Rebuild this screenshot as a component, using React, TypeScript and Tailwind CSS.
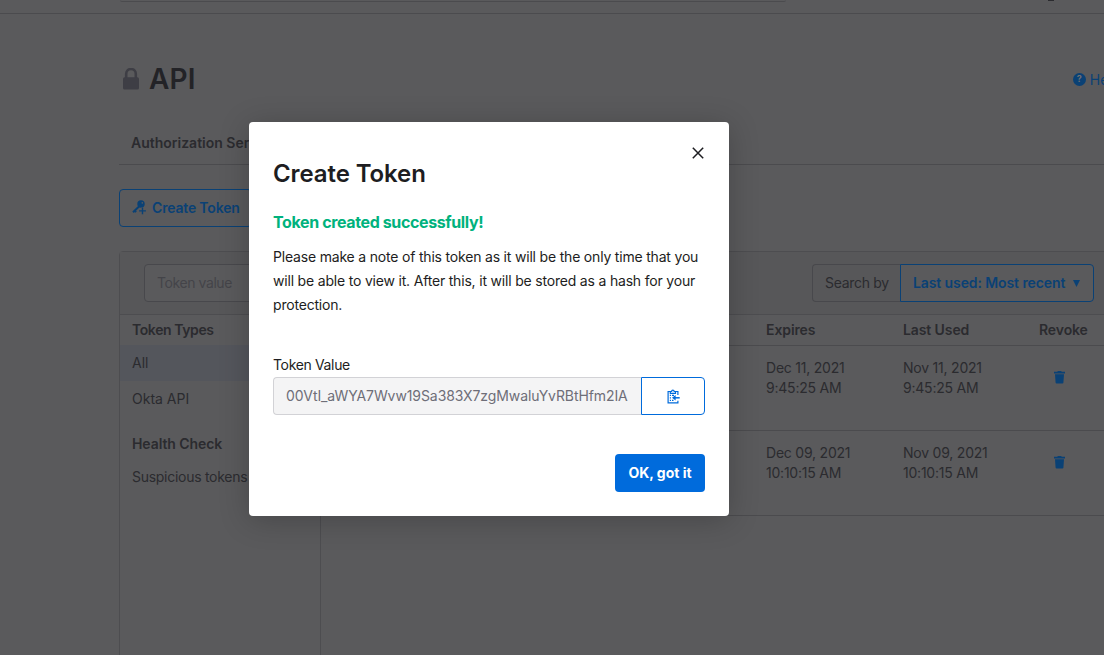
import React from "react";

const LockIcon = () => (
  <svg width="18" height="23" viewBox="0 0 18 23" className="shrink-0">
    <path d="M4.200 10V5.800a4.800 4.800 0 0 1 9.600 0V10" fill="none" stroke="#3e3e45" strokeWidth="2.600" />
    <rect x="1" y="9.300" width="16" height="12.300" rx="1.600" fill="#3e3e45" />
  </svg>
);

const KeyPlusIcon = () => (
  <svg width="15" height="15" viewBox="0 0 15 15" className="shrink-0">
    <path d="M7 6.500L1 12.300M2.600 10.600l1.500 1.500" stroke="#0a4175" strokeWidth="2" fill="none" />
    <circle cx="9" cy="4" r="3.700" fill="#0a4175" />
    <circle cx="10.300" cy="2.900" r=".8" fill="#5a5a5c" />
    <path d="M10.500 7.500v6.800M7.100 10.900h6.800" stroke="#5a5a5c" strokeWidth="2.600" />
    <path d="M10.500 7.500v6.800M7.100 10.900h6.800" stroke="#0a4175" strokeWidth="1.400" />
  </svg>
);

const TrashIcon = () => (
  <svg width="11" height="13" viewBox="0 0 11 13" fill="#0a4175">
    <path d="M0 .800h3.300L3.800 0h3.400l.5.800H11v1.700H0zM1 3.300h9l-.6 8.400a1 1 0 0 1-1 .8H2.600a1 1 0 0 1-1-.8z" />
  </svg>
);

const ClipboardIcon = () => (
  <svg width="13" height="15" viewBox="0 0 13 15" fill="none" stroke="#006bdc" strokeWidth="1.200">
    <path d="M3 2.500H1.100v11.400h9.800v-2.200M8.200 2.500h2.700v3.500" />
    <path d="M3.300 4.300V2.500h1.300a1.300 1.300 0 0 1 2.600 0h1.300v1.800z" />
    <path d="M2.800 6.400h1.200M5 6.400h2M2.800 8.800h1.200M2.800 11.300h1.200M5 11.300h1.500" />
    <path d="M12.700 8.800H7.500" strokeWidth="1.500" />
    <path d="M8.600 6.100v5.400L5 8.800z" fill="#006bdc" stroke="none" />
  </svg>
);

const tokens = [
  { expires: ["Dec 11, 2021", "9:45:25 AM"], used: ["Nov 11, 2021", "9:45:25 AM"] },
  { expires: ["Dec 09, 2021", "10:10:15 AM"], used: ["Nov 09, 2021", "10:10:15 AM"] },
];

function Stamp({ lines }: { lines: string[] }) {
  return (
    <div className="w-[137px] shrink-0 tracking-[-0.22px] whitespace-nowrap">
      {lines.map((l) => (
        <div key={l}>{l}</div>
      ))}
    </div>
  );
}

function Modal() {
  return (
    <div className="absolute left-[249px] top-[122px] flex h-[394px] w-[480px] flex-col rounded-[4px] bg-white px-6 text-[#1d1d21] shadow-[0_4px_30px_rgba(0,0,0,0.22)]">
      <div className="flex h-[62px] justify-end pt-[25px] pr-[1px]">
        <svg width="12" height="12" viewBox="0 0 12 12" stroke="#1d1d21" strokeWidth="1.500">
          <path d="M.8.800l10.400 10.400M11.200.800L.8 11.200" />
        </svg>
      </div>
      <h2 className="-mt-[26px] text-[24px] leading-[32px] font-semibold tracking-[-0.1px]">Create Token</h2>
      <h3 className="mt-[20px] text-[16px] leading-[24px] font-bold tracking-[-0.38px] text-[#00b27d]">Token created successfully!</h3>
      <p className="mt-[11px] text-[14px] leading-[24px] tracking-[-0.19px] whitespace-nowrap">
        Please make a note of this token as it will be the only time that you
        <br />
        will be able to view it. After this, it will be stored as a hash for your
        <br />
        protection.
      </p>
      <div className="mt-[38px] text-[14px] leading-[20px] tracking-[-0.35px]">Token Value</div>
      <div className="mt-[2px] flex h-[38px]">
        <div className="flex w-[368px] items-center rounded-l-[4px] border border-r-0 border-[#d2d2d6] bg-[#f4f4f5] px-3 pb-[1px] text-[14px] tracking-[-0.09px] whitespace-nowrap text-[#6e6e78]">
          00VtI_aWYA7Wvw19Sa383X7zgMwaluYvRBtHfm2IA
        </div>
        <button className="flex w-[64px] items-center justify-center rounded-r-[4px] border border-[#006bdc]">
          <ClipboardIcon />
        </button>
      </div>
      <button className="mt-[39px] h-[38px] w-[90px] self-end rounded-[4px] bg-[#006bdc] pb-[2px] text-[14px] font-bold whitespace-nowrap text-white">
        OK, got it
      </button>
    </div>
  );
}

export default function App() {
  return (
    <div className="relative h-[655px] w-[1104px] overflow-hidden bg-[#5a5a5c] font-['Inter',sans-serif] text-[14px] text-[#2b2b2f]">
      <header className="flex h-[14px] items-start border-b border-[#4b4b4e] pl-[120px]">
        <div className="h-[2px] w-[666px] rounded-b-[2px] border-b border-[#4b4b4e]" />
        <div className="ml-[262px] h-[1px] w-[6px] bg-[#2b2b2f]" />
      </header>

      <div className="ml-[119px] flex flex-col">
        <div className="flex h-[106px] items-center pt-[24px] pl-[3px]">
          <LockIcon />
          <h1 className="ml-[9px] w-[47px] text-[28px] leading-[34px] font-semibold tracking-[0.2px] text-[#232327]">API</h1>
          <div className="ml-[877px] flex shrink-0 items-center text-[#0a4175]">
            <span className="flex h-[13px] w-[13px] items-center justify-center rounded-full bg-[#0a4175] text-[9px] font-bold text-[#707072]">?</span>
            <span className="ml-[4px]">Help</span>
          </div>
        </div>
        <div className="flex h-[45px] items-center border-b border-[#4b4b4e] pt-[1px] pl-[12px] font-semibold">
          Authorization Servers
        </div>
        <button className="mt-[24px] flex h-[38px] w-[133px] items-center rounded-[4px] border border-[#0a4175] pb-[1px] pl-[12px] font-semibold whitespace-nowrap text-[#0a4175]">
          <KeyPlusIcon />
          <span className="ml-[5px] tracking-[-0.18px]">Create Token</span>
        </button>

        <section className="mt-[24px] h-[420px] w-[1000px] rounded-tl-[4px] border border-[#4d4d50]">
          <div className="flex h-[63px] items-start justify-between border-b border-[#4d4d50] bg-[#575759] pt-[12px] pr-[24px] pl-[24px]">
            <div className="flex h-[38px] w-[220px] items-center rounded-[4px] border border-[#48484c] bg-[#5a5a5c] pb-[1px] pl-[12px] tracking-[-0.42px] text-[#444449]">
              Token value
            </div>
            <div className="flex h-[38px] w-[282px]">
              <div className="flex w-[88px] items-center rounded-l-[4px] border border-r-0 border-[#48484c] pb-[1px] pl-[12px] tracking-[-0.3px] whitespace-nowrap">
                Search by
              </div>
              <button className="flex w-[194px] items-center rounded-r-[4px] border border-[#0a4175] bg-[#5a5a5c] pb-[1px] pl-[12px] font-semibold whitespace-nowrap text-[#0a4175]">
                <span className="tracking-[-0.1px]">Last used: Most recent</span>
                <svg width="7" height="7" viewBox="0 0 7 7" className="mt-[2px] ml-[8px]">
                  <path d="M0 0h7L3.500 7z" fill="#0a4175" />
                </svg>
              </button>
            </div>
          </div>
          <div className="flex h-full">
            <aside className="w-[201px] shrink-0 border-r border-[#4d4d50]">
              <div className="h-[30px] pl-[12px] leading-[30px] font-semibold tracking-[-0.4px]">Token Types</div>
              <div className="h-[36px] bg-[#54565c] pl-[12px] leading-[36px]">All</div>
              <div className="h-[36px] pl-[12px] leading-[36px]">Okta API</div>
              <div className="mt-[12px] h-[30px] pl-[12px] leading-[30px] font-semibold tracking-[-0.08px]">Health Check</div>
              <div className="h-[36px] pl-[12px] leading-[36px] tracking-[-0.28px]">Suspicious tokens</div>
            </aside>
            <div className="flex-1 leading-[20px]">
              <div className="flex h-[31px] items-center border-b border-[#4b4b4e] pl-[445px] font-semibold tracking-[-0.1px]">
                <div className="w-[137px]">Expires</div>
                <div className="w-[136px]">Last Used</div>
                <div>Revoke</div>
              </div>
              {tokens.map((t) => (
                <div key={t.expires[0]} className="flex h-[85px] border-b border-[#4b4b4e] pt-[12px] pl-[445px]">
                  <Stamp lines={t.expires} />
                  <Stamp lines={t.used} />
                  <div className="pt-[13px] pl-[14px]">
                    <TrashIcon />
                  </div>
                </div>
              ))}
            </div>
          </div>
        </section>
      </div>
      <Modal />
    </div>
  );
}
